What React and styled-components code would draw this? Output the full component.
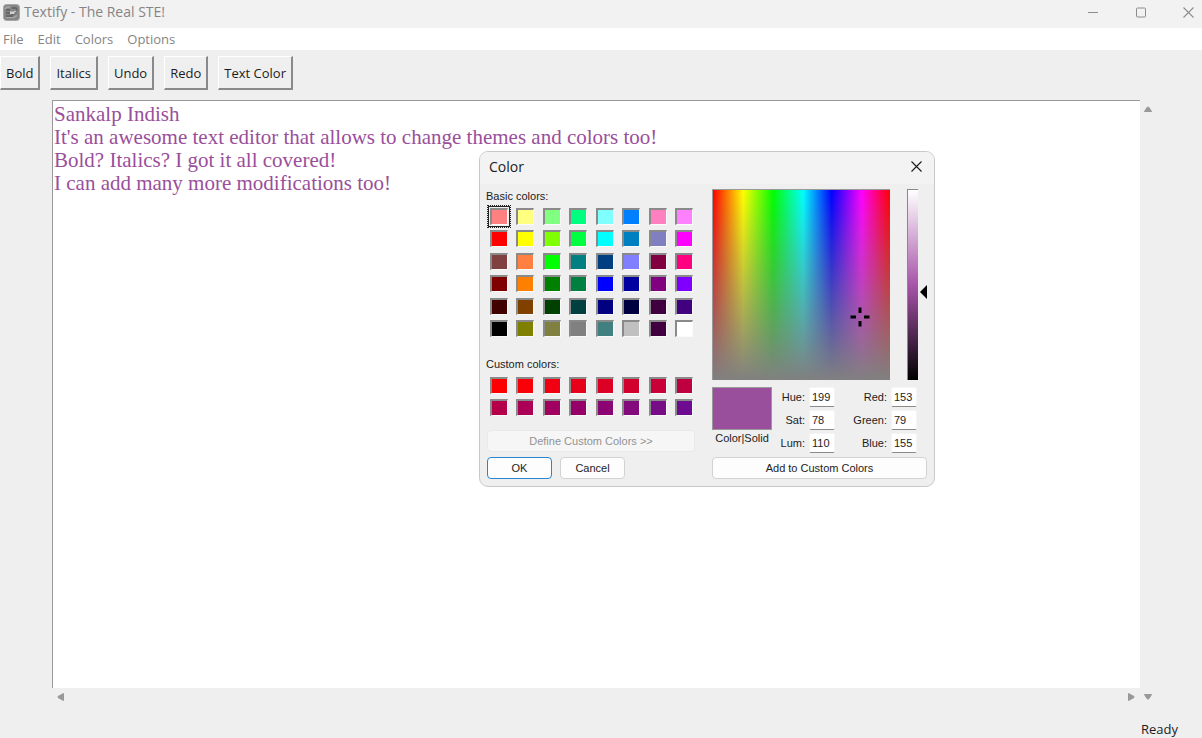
import React from 'react';
import styled, { createGlobalStyle } from 'styled-components';

const GlobalStyle = createGlobalStyle`
  *, *::before, *::after { box-sizing: border-box; }
  html, body { margin: 0; height: 100%; background: #efefef; }
  #root { height: 100%; }
  button, input, textarea { font: inherit; color: inherit; margin: 0; }
`;

const AppWindow = styled.div`
  display: flex;
  flex-direction: column;
  min-height: 100vh;
  background: #efefef;
  color: #1c1c1c;
  font: 13px/18px "Open Sans", "Noto Sans", sans-serif;
  overflow: hidden;
`;

const TitleBar = styled.header`
  display: flex;
  align-items: center;
  gap: 4px;
  height: 28px;
  padding: 0 8px 4px 3px;
  background: #f2f2f2;
  color: #858585;
`;

const AppTitle = styled.h1`
  flex: 1;
  margin: 0;
  font-size: 14px;
  font-weight: 400;
  line-height: 20px;
`;

const Caption = styled.div`
  display: flex;
  gap: 36px;
`;

const IconButton = styled.button`
  display: flex;
  padding: 0;
  border: 0;
  background: none;
  color: ${({ $strong }) => ($strong ? '#1a1a1a' : '#8d8d8d')};
`;

const MenuBar = styled.nav`
  display: flex;
  align-items: center;
  gap: 14px;
  height: 22px;
  padding: 0 3px;
  background: #fff;
  color: #858585;
`;

const MenuButton = styled.button`
  padding: 0;
  border: 0;
  background: none;
  line-height: 18px;
`;

const ToolBar = styled.div`
  display: flex;
  gap: 10px;
  padding: 6px 0 0;
`;

const ToolButton = styled.button`
  height: 34px;
  padding: 0 5px;
  border: 1px solid #fff;
  border-right: 2px solid #8a8a8a;
  border-bottom: 2px solid #8a8a8a;
  background: #efefef;
  white-space: nowrap;
`;

const Workspace = styled.main`
  flex: 1;
  display: grid;
  grid-template-columns: 1fr 16px;
  grid-template-rows: 1fr 16px;
  padding: 10px 46px 0 52px;
`;

const Editor = styled.textarea`
  width: 100%;
  height: 100%;
  padding: 2px 1px;
  border: 0;
  border-top: 1px solid #999;
  border-left: 1px solid #999;
  border-radius: 0;
  outline: 0;
  resize: none;
  background: #fff;
  color: #994f9b;
  font: 21px/23px "Liberation Serif", serif;
`;

const ScrollTrack = styled.div`
  display: flex;
  flex-direction: ${({ $vertical }) => ($vertical ? 'column' : 'row')};
  grid-row: ${({ $vertical }) => ($vertical ? '1 / 3' : '2')};
  grid-column: ${({ $vertical }) => ($vertical ? '2' : '1')};
  justify-content: space-between;
  align-items: center;
  padding: ${({ $vertical }) => ($vertical ? '4px 0 2px' : '1px 4px 0')};
`;

const StatusBar = styled.footer`
  display: flex;
  justify-content: flex-end;
  padding: 16px 24px 0;
`;

const Dialog = styled.section`
  position: absolute;
  left: 479px;
  top: 151px;
  width: 456px;
  border: 1px solid #c9c9c9;
  border-radius: 9px;
  background: #efefef;
  color: #1c1c1c;
  font: 11px/14px "Liberation Sans", sans-serif;
  overflow: hidden;
`;

const DialogHeader = styled.header`
  display: flex;
  justify-content: space-between;
  align-items: center;
  height: 32px;
  padding: 0 12px 3px 9px;
  background: #f3f3f3;
`;

const DialogTitle = styled.h2`
  margin: 0;
  font: 400 14px/18px "Open Sans", "Noto Sans", sans-serif;
`;

const DialogBody = styled.div`
  display: flex;
  justify-content: space-between;
  padding: 5px 7px 7px;
`;

const Palette = styled.div`
  display: flex;
  flex-direction: column;
  width: 208px;
`;

const GroupLabel = styled.h3`
  margin: 0 0 0 -1px;
  font-size: 11px;
  font-weight: 400;
  line-height: 14px;
`;

const SwatchGrid = styled.div`
  display: grid;
  grid-template-columns: repeat(8, 18px);
  justify-content: space-between;
  align-content: space-between;
  height: ${({ $rows }) => ($rows > 2 ? '129px' : '39px')};
  margin: ${({ $rows }) => ($rows > 2 ? '5px 2px 20px 3px' : '6px 2px 14px 3px')};
`;

const Swatch = styled.button`
  width: 18px;
  height: 17px;
  padding: 0;
  border: 1px solid #fafafa;
  border-top: 2px solid #8a8a8a;
  border-left: 2px solid #8a8a8a;
  background: ${({ $color }) => $color};
  box-shadow: ${({ $selected }) => ($selected ? '0 0 0 1px #efefef, 0 0 0 2px #222' : 'none')};
  outline: ${({ $selected }) => ($selected ? '1px dotted #222' : '0')};
  outline-offset: 2px;
`;

const ButtonRow = styled.div`
  display: flex;
  gap: 8px;
  margin-top: 5px;
`;

const DialogButton = styled.button`
  width: ${({ $wide }) => ($wide ? '100%' : '65px')};
  height: 22px;
  padding: 0;
  border: 1px solid ${({ $primary }) => ($primary ? '#2a84cf' : '#d2d2d2')};
  border-radius: 4px;
  background: #fdfdfd;
  &:disabled {
    border-color: #e9e9e9;
    background: #f6f6f6;
    color: #939393;
  }
`;

const Mixer = styled.div`
  display: flex;
  flex-direction: column;
  width: 215px;
`;

const PickerRow = styled.div`
  display: flex;
  height: 191px;
`;

const Spectrum = styled.div`
  width: 178px;
  border-top: 1px solid #999;
  border-left: 1px solid #999;
  background:
    linear-gradient(to bottom, rgba(128, 128, 128, 0), #808080),
    linear-gradient(to right, #f00, #ff0 17%, #0f0 34%, #0ff 51%, #00f 67%, #f0f 84%, #f00);
`;

const Crosshair = styled.svg`
  display: block;
  margin: 117px 0 0 137px;
`;

const LumBar = styled.div`
  width: 11px;
  margin-left: 17px;
  border-top: 1px solid #888;
  border-left: 1px solid #888;
  background: linear-gradient(to bottom, #fff, #a754a9 50%, #000);
`;

const LumPointer = styled.svg`
  margin: 96px 0 0 1px;
`;

const Values = styled.div`
  display: grid;
  grid-template-columns: 60px 63px 82px;
  height: 65px;
  margin: 7px 0 5px;
`;

const Preview = styled.div`
  height: 43px;
  margin-bottom: 1px;
  border: 1px solid #999;
  background: #994f9b;
`;

const PreviewLabel = styled.div`
  text-align: center;
  white-space: nowrap;
`;

const FieldColumn = styled.div`
  display: flex;
  flex-direction: column;
  gap: 3px;
`;

const Field = styled.label`
  display: flex;
  justify-content: flex-end;
  align-items: center;
  gap: 4px;
`;

const NumberInput = styled.input`
  width: 26px;
  height: 20px;
  padding: 0 2px;
  border: 1px solid #f5f5f5;
  border-bottom-color: #8b8b8b;
  border-radius: 2px;
  outline: 0;
  background: #fff;
`;

const basicColors = [
  '#ff8080', '#ffff80', '#80ff80', '#00ff80', '#80ffff', '#0080ff', '#ff80c0', '#ff80ff',
  '#ff0000', '#ffff00', '#80ff00', '#00ff40', '#00ffff', '#0080c0', '#8080c0', '#ff00ff',
  '#804040', '#ff8040', '#00ff00', '#008080', '#004080', '#8080ff', '#800040', '#ff0080',
  '#800000', '#ff8000', '#008000', '#008040', '#0000ff', '#0000a0', '#800080', '#8000ff',
  '#400000', '#804000', '#004000', '#004040', '#000080', '#000040', '#400040', '#400080',
  '#000000', '#808000', '#808040', '#808080', '#408080', '#c0c0c0', '#400040', '#ffffff',
];

const customColors = [
  '#ff0000', '#fa0008', '#f00010', '#e6001a', '#dc0024', '#d2002d', '#c80037', '#be0041',
  '#b4004b', '#aa0055', '#a0005f', '#960069', '#8c0473', '#820a7d', '#780c87', '#6e0c91',
];

const documentText = `Sankalp Indish
It's an awesome text editor that allows to change themes and colors too!
Bold? Italics? I got it all covered!
I can add many more modifications too!`;

const arrowPaths = {
  up: 'M1 8 Q1 7 4 3 Q5 2 6 3 Q9 7 9 8Z',
  down: 'M1 2 Q1 3 4 7 Q5 8 6 7 Q9 3 9 2Z',
  left: 'M8 1 Q7 1 2 4 Q1 5 2 6 Q7 9 8 9Z',
  right: 'M2 1 Q3 1 8 4 Q9 5 8 6 Q3 9 2 9Z',
};

function Arrow({ direction }) {
  return (
    <IconButton aria-label={`Scroll ${direction}`}>
      <svg width="10" height="10" viewBox="0 0 10 10" fill="#999"><path d={arrowPaths[direction]} /></svg>
    </IconButton>
  );
}

function CloseIcon() {
  return (
    <svg width="11" height="11" viewBox="0 0 11 11" fill="none" stroke="currentColor" strokeWidth="1.1">
      <path d="M.5 .5 10.5 10.5M10.5 .5 .5 10.5" />
    </svg>
  );
}

function AppIcon() {
  return (
    <svg width="17" height="17" viewBox="0 0 17 17">
      <rect x=".5" y=".5" width="16" height="16" rx="3" fill="#858585" stroke="#a6a6a6" />
      <path d="M2 5 4 3h3M3 13.500h8l3-2" fill="none" stroke="#a8a8a8" strokeWidth="1.5" />
      <path d="M3 6h4M3 9h5M3 12h7" fill="none" stroke="#5c5c5c" strokeWidth="1.4" />
      <path d="M9 4h4l1 2-3 4H8" fill="none" stroke="#5c5c5c" strokeWidth="1.3" />
      <path d="M7 7.500h4l3-1.500-3 4H7Z" fill="#d2d2d2" />
    </svg>
  );
}

function Swatches({ colors, rows, selected, name }) {
  return (
    <SwatchGrid $rows={rows}>
      {colors.map((color, i) => (
        <Swatch key={i} $color={color} $selected={i === selected} aria-label={`${name} ${color}`} />
      ))}
    </SwatchGrid>
  );
}

function Fields({ items }) {
  return (
    <FieldColumn>
      {items.map(([label, value]) => (
        <Field key={label}>
          {label}:
          <NumberInput defaultValue={value} />
        </Field>
      ))}
    </FieldColumn>
  );
}

function ColorDialog() {
  return (
    <Dialog role="dialog" aria-labelledby="color-title">
      <DialogHeader>
        <DialogTitle id="color-title">Color</DialogTitle>
        <IconButton $strong aria-label="Close dialog"><CloseIcon /></IconButton>
      </DialogHeader>
      <DialogBody>
        <Palette>
          <GroupLabel>Basic colors:</GroupLabel>
          <Swatches colors={basicColors} rows={6} selected={0} name="Basic color" />
          <GroupLabel>Custom colors:</GroupLabel>
          <Swatches colors={customColors} rows={2} name="Custom color" />
          <DialogButton $wide disabled>Define Custom Colors &gt;&gt;</DialogButton>
          <ButtonRow>
            <DialogButton $primary>OK</DialogButton>
            <DialogButton>Cancel</DialogButton>
          </ButtonRow>
        </Palette>
        <Mixer>
          <PickerRow>
            <Spectrum>
              <Crosshair width="20" height="20" viewBox="0 0 20 20" fill="none" stroke="#000" strokeWidth="3">
                <path d="M10 0.500V6M10 14V19.500M.5 10H6M14 10H19.500" />
              </Crosshair>
            </Spectrum>
            <LumBar />
            <LumPointer width="8" height="14" viewBox="0 0 8 14"><path d="M8 0V14L1 7Z" /></LumPointer>
          </PickerRow>
          <Values>
            <div>
              <Preview />
              <PreviewLabel>Color|Solid</PreviewLabel>
            </div>
            <Fields items={[['Hue', 199], ['Sat', 78], ['Lum', 110]]} />
            <Fields items={[['Red', 153], ['Green', 79], ['Blue', 155]]} />
          </Values>
          <DialogButton $wide>Add to Custom Colors</DialogButton>
        </Mixer>
      </DialogBody>
    </Dialog>
  );
}

export default function App() {
  return (
    <>
      <GlobalStyle />
      <AppWindow>
        <TitleBar>
          <AppIcon />
          <AppTitle>Textify - The Real STE!</AppTitle>
          <Caption>
            <IconButton aria-label="Minimize">
              <svg width="12" height="11" viewBox="0 0 12 11" stroke="currentColor"><path d="M1 5.500H11" /></svg>
            </IconButton>
            <IconButton aria-label="Maximize">
              <svg width="12" height="11" viewBox="0 0 12 11" fill="none" stroke="currentColor">
                <rect x="1.500" y="1" width="9" height="9" rx="1" />
              </svg>
            </IconButton>
            <IconButton aria-label="Close"><CloseIcon /></IconButton>
          </Caption>
        </TitleBar>
        <MenuBar>
          {['File', 'Edit', 'Colors', 'Options'].map((item) => <MenuButton key={item}>{item}</MenuButton>)}
        </MenuBar>
        <ToolBar>
          {['Bold', 'Italics', 'Undo', 'Redo', 'Text Color'].map((item) => <ToolButton key={item}>{item}</ToolButton>)}
        </ToolBar>
        <Workspace>
          <Editor aria-label="Document" wrap="off" spellCheck={false} defaultValue={documentText} />
          <ScrollTrack $vertical>
            <Arrow direction="up" />
            <Arrow direction="down" />
          </ScrollTrack>
          <ScrollTrack>
            <Arrow direction="left" />
            <Arrow direction="right" />
          </ScrollTrack>
        </Workspace>
        <StatusBar>Ready</StatusBar>
      </AppWindow>
      <ColorDialog />
    </>
  );
}
